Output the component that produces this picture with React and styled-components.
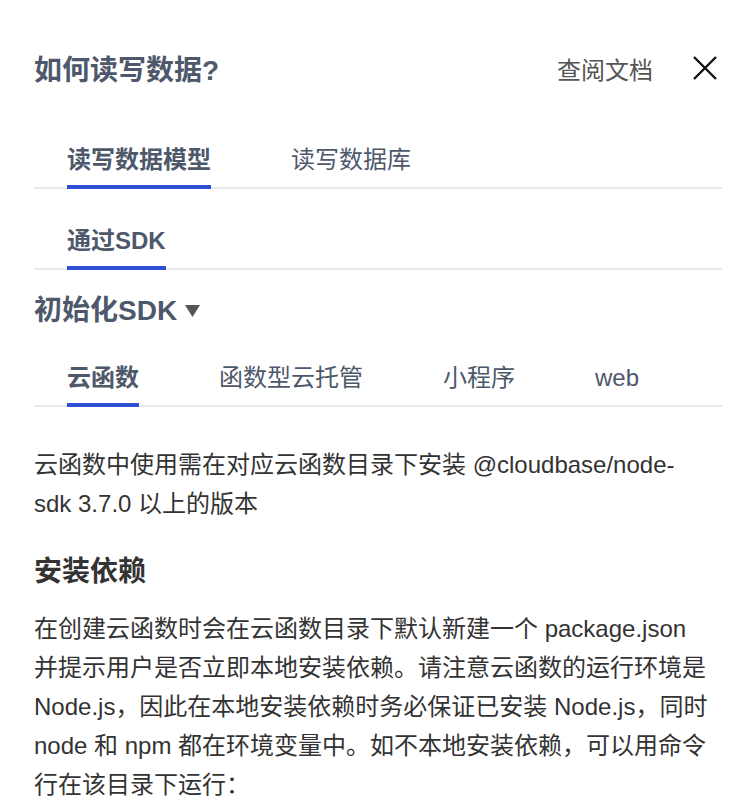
import React, { useState } from "react";
import styled, { createGlobalStyle } from "styled-components";

const Global = createGlobalStyle`
  body {
    margin: 0;
    background: #fff;
    font-family: "Liberation Sans", "Noto Sans CJK SC", sans-serif;
  }
`;

const Panel = styled.div`
  width: 746px;
  box-sizing: border-box;
  padding: 40px 24px 0 34px;
  color: #333;
`;

const Header = styled.div`
  height: 56px;
  display: flex;
  align-items: center;
  justify-content: space-between;
`;

const Title = styled.h2`
  margin: 0;
  font-size: 28px;
  font-weight: 700;
  color: #4e586b;
`;

const HeaderRight = styled.div`
  display: flex;
  align-items: center;
  gap: 40px;
`;

const DocLink = styled.a`
  font-size: 24px;
  color: #555;
  text-decoration: none;
  cursor: pointer;
`;

const CloseBtn = styled.button`
  border: 0;
  background: none;
  padding: 0;
  width: 24px;
  height: 24px;
  display: flex;
  align-items: center;
  justify-content: center;
  cursor: pointer;
  margin-right: 5px;
`;

const TabBar = styled.div`
  display: flex;
  gap: 80px;
  padding: 0 33px;
  margin-top: ${({ top }) => top}px;
  border-bottom: 2px solid #e8e9ee;
`;

const Tab = styled.div`
  position: relative;
  padding: 12px 0 11px;
  line-height: 32px;
  font-size: 24px;
  font-weight: ${({ active }) => (active ? 700 : 400)};
  color: #4e586b;
  cursor: pointer;

  &::after {
    content: "";
    position: absolute;
    left: 0;
    right: 0;
    bottom: -2px;
    height: 4px;
    background: ${({ active }) => (active ? "#2c4fd3" : "transparent")};
  }
`;

const Heading = styled.h3`
  margin: ${({ top }) => top}px 0 0;
  line-height: 36px;
  font-size: 28px;
  font-weight: 700;
  color: ${({ dark }) => (dark ? "#333" : "#4e586b")};
  display: flex;
  align-items: center;
  gap: 8px;
`;

const Para = styled.p`
  margin: ${({ top }) => top}px 0 0;
  max-width: 676px;
  font-size: 24px;
  line-height: 39px;
  color: #333;
`;

const Tabs = ({ items, top }) => {
  const [cur, setCur] = useState(0);
  return (
    <TabBar top={top}>
      {items.map((t, i) => (
        <Tab key={t} active={i === cur} onClick={() => setCur(i)}>
          {t}
        </Tab>
      ))}
    </TabBar>
  );
};

const App = () => (
  <Panel>
    <Global />
    <Header>
      <Title>如何读写数据?</Title>
      <HeaderRight>
        <DocLink>查阅文档</DocLink>
        <CloseBtn>
          <svg width="24" height="24" viewBox="0 0 24 24">
            <path d="M1 1L23 23M23 1L1 23" stroke="#111" strokeWidth="2.4" fill="none" />
          </svg>
        </CloseBtn>
      </HeaderRight>
    </Header>

    <Tabs top={36} items={["读写数据模型", "读写数据库"]} />
    <Tabs top={24} items={["通过SDK"]} />

    <Heading top={23}>
      初始化SDK
      <svg width="15" height="12" viewBox="0 0 15 12">
        <path d="M0 0H15L7.5 12Z" fill="#555" />
      </svg>
    </Heading>

    <Tabs top={21} items={["云函数", "函数型云托管", "小程序", "web"]} />

    <Para top={38}>
      云函数中使用需在对应云函数目录下安装 @cloudbase/node-sdk 3.7.0 以上的版本
    </Para>

    <Heading top={31} dark>安装依赖</Heading>

    <Para top={19}>
      在创建云函数时会在云函数目录下默认新建一个 package.json
      并提示用户是否立即本地安装依赖。请注意云函数的运行环境是
      Node.js，因此在本地安装依赖时务必保证已安装 Node.js，同时
      node 和 npm 都在环境变量中。如不本地安装依赖，可以用命令行在该目录下运行：
    </Para>
  </Panel>
);

export default App;
